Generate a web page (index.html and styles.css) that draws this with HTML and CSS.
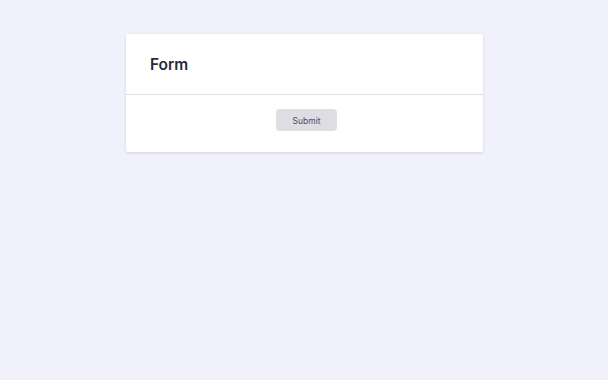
FILE: index.html
```html
<!DOCTYPE html>
<html lang="en">
<head>
    <meta charset="UTF-8">
    <meta name="viewport" content="width=device-width, initial-scale=1.0">
    <title>Form</title>
    <link rel="stylesheet" href="styles.css">
</head>
<body>
    <div class="form-card">
        <div class="form-header">
            <h2 class="form-title">Form</h2>
        </div>
        <form class="form-body">
            <button type="submit" class="submit-button" disabled>Submit</button>
        </form>
    </div>
</body>
</html>
```

FILE: styles.css
```css
body {
    font-family: Inter, 'Noto Sans', sans-serif;
    background-color: #f1f1fb;
    margin: 0;
    padding: 34px 0 0;
    display: flex;
    flex-direction: column;
    align-items: center;
    min-height: 100vh;
    box-sizing: border-box;
}
.form-card {
    background-color: white;
    border-radius: 2px;
    box-shadow: 0 1px 3px rgba(40, 40, 80, 0.15);
    width: 357px;
    margin-left: 1px;
}
.form-header {
    padding: 20px 24px 18px;
    border-bottom: 1px solid #dcdce8;
}
.form-title {
    margin: 0;
    font-size: 15.5px;
    line-height: 22px;
    font-weight: 600;
    color: #2a2a3b;
}
.form-body {
    display: flex;
    justify-content: center;
    padding: 14px 0 21px 4px;
    margin: 0;
}
.submit-button {
    font-family: inherit;
    background-color: #dddde3;
    color: #4b4b5c;
    border: none;
    border-radius: 4px;
    font-size: 8.5px;
    height: 22px;
    width: 61px;
    padding: 0;
    padding-top: 1px;
    cursor: not-allowed;
}
```
